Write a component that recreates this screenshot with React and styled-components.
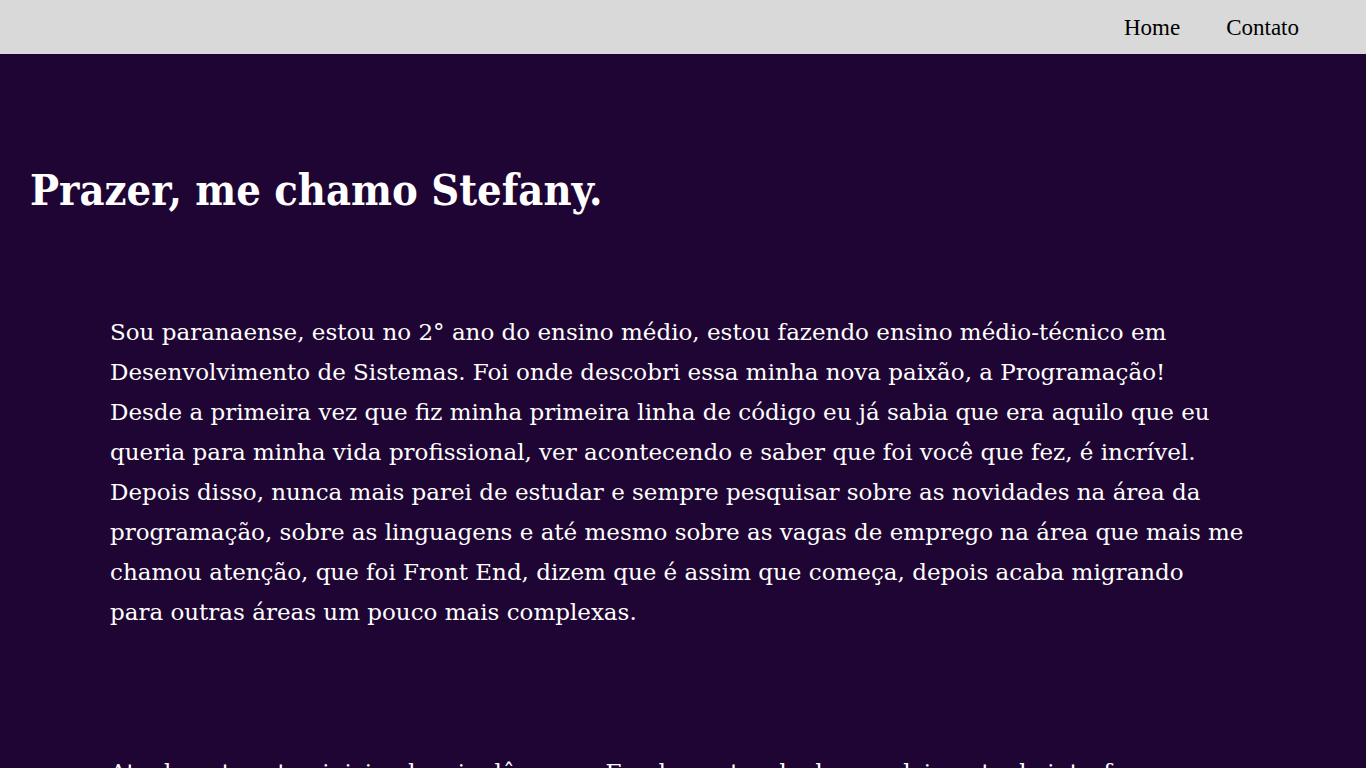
import React from "react";
import styled, { createGlobalStyle } from "styled-components";

const Global = createGlobalStyle`
  html, body { margin: 0; padding: 0; }
  body { background: #1f0533; font-family: "Liberation Serif", serif; }
`;

const Header = styled.header`
  height: 54px;
  background: #d9d9d9;
  display: flex;
  justify-content: flex-end;
  align-items: center;
  padding-right: 67px;
`;

const Nav = styled.nav`
  display: flex;
  gap: 46px;
  padding-top: 2px;
`;

const NavLink = styled.a`
  font-family: "Liberation Serif", serif;
  font-size: 23px;
  color: #000;
  text-decoration: none;
`;

const Main = styled.main`
  background: #1f0533;
  color: #fff;
  font-family: "DejaVu Serif", serif;
  padding-bottom: 498px;
`;

const Hero = styled.section`
  padding: 106px 30px 0;
`;

const Title = styled.h1`
  margin: 0;
  font-family: "DejaVu Serif Condensed", "DejaVu Serif", serif;
  font-size: 43px;
  font-weight: bold;
  line-height: 60px;
`;

const Block = styled.section`
  padding: ${(p) => p.$top}px 110px 0;
`;

const Text = styled.p`
  margin: 0;
  font-size: 23px;
  line-height: 40px;
  white-space: nowrap;
`;

const lines1 = [
  "Sou paranaense, estou no 2° ano do ensino médio, estou fazendo ensino médio-técnico em",
  "Desenvolvimento de Sistemas. Foi onde descobri essa minha nova paixão, a Programação!",
  "Desde a primeira vez que fiz minha primeira linha de código eu já sabia que era aquilo que eu",
  "queria para minha vida profissional, ver acontecendo e saber que foi você que fez, é incrível.",
  "Depois disso, nunca mais parei de estudar e sempre pesquisar sobre as novidades na área da",
  "programação, sobre as linguagens e até mesmo sobre as vagas de emprego na área que mais me",
  "chamou atenção, que foi Front End, dizem que é assim que começa, depois acaba migrando",
  "para outras áreas um pouco mais complexas.",
];

const lines2 = [
  "Atualmente estou iniciando o inglês, e em Fundamentos do desenvolvimento de interfaces",
  "estou aprendendo HTML, CSS e JavaScript, buscando sempre melhorar e criar projetos que",
  "me ajudem a crescer como desenvolvedora.",
];

const Lines = ({ items }) => (
  <Text>
    {items.map((l, i) => (
      <React.Fragment key={i}>
        {l}
        {i < items.length - 1 && <br />}
      </React.Fragment>
    ))}
  </Text>
);

export default function App() {
  return (
    <>
      <Global />
      <Header>
        <Nav>
          <NavLink href="#">Home</NavLink>
          <NavLink href="#">Contato</NavLink>
        </Nav>
      </Header>
      <Main>
        <Hero>
          <Title>Prazer, me chamo Stefany.</Title>
        </Hero>
        <Block $top={92}>
          <Lines items={lines1} />
        </Block>
        <Block $top={120}>
          <Lines items={lines2} />
        </Block>
      </Main>
    </>
  );
}
